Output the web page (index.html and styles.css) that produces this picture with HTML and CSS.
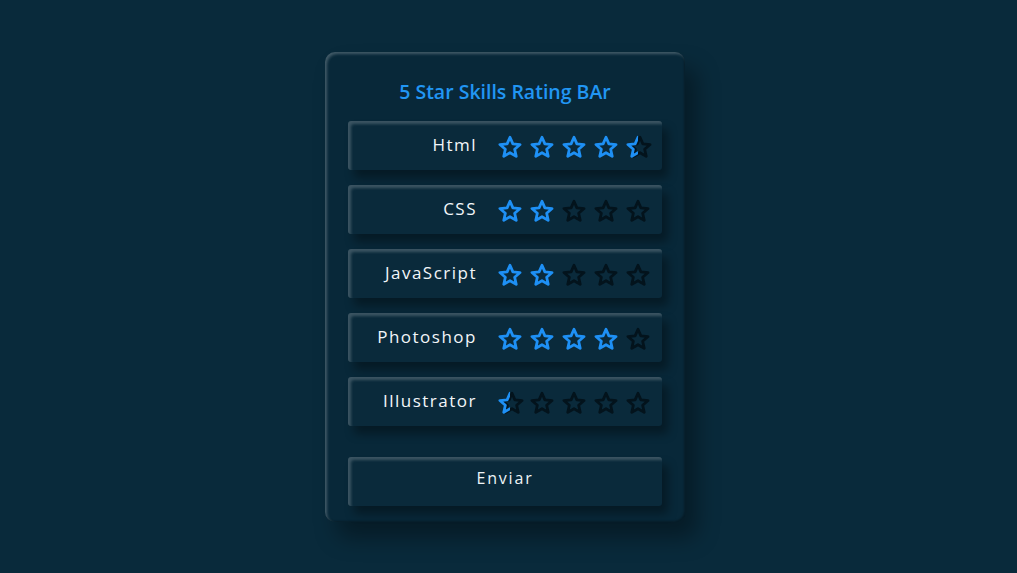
FILE: index.html
```html
<!DOCTYPE html>
<html lang="en">
<head>
<meta charset="utf-8">
<title>5 Star Skills Rating</title>
<link rel="stylesheet" href="styles.css">
</head>
<body>
<svg width="0" height="0" class="defs">
  <defs>
    <path id="star" d="M12 2.2 L14.88 8.84 L22.08 9.52 L16.66 14.31 L18.23 21.38 L12 17.7 L5.77 21.38 L7.34 14.31 L1.92 9.52 L9.12 8.84 Z"/>
  </defs>
</svg>
<main class="page">
  <section class="card">
    <h1 class="title">5 Star Skills Rating BAr</h1>
    <div class="rows">
      <div class="row">
        <span class="label">Html</span>
        <div class="stars">
          <svg class="star on" viewBox="0 0 24 24"><use href="#star"/></svg>
          <svg class="star on" viewBox="0 0 24 24"><use href="#star"/></svg>
          <svg class="star on" viewBox="0 0 24 24"><use href="#star"/></svg>
          <svg class="star on" viewBox="0 0 24 24"><use href="#star"/></svg>
          <span class="half"><svg class="star off shift" viewBox="0 0 24 24"><use href="#star"/></svg><span class="half-clip"><svg class="star on" viewBox="0 0 24 24"><use href="#star"/></svg></span></span>
        </div>
      </div>
      <div class="row">
        <span class="label">CSS</span>
        <div class="stars">
          <svg class="star on" viewBox="0 0 24 24"><use href="#star"/></svg>
          <svg class="star on" viewBox="0 0 24 24"><use href="#star"/></svg>
          <svg class="star off" viewBox="0 0 24 24"><use href="#star"/></svg>
          <svg class="star off" viewBox="0 0 24 24"><use href="#star"/></svg>
          <svg class="star off" viewBox="0 0 24 24"><use href="#star"/></svg>
        </div>
      </div>
      <div class="row">
        <span class="label">JavaScript</span>
        <div class="stars">
          <svg class="star on" viewBox="0 0 24 24"><use href="#star"/></svg>
          <svg class="star on" viewBox="0 0 24 24"><use href="#star"/></svg>
          <svg class="star off" viewBox="0 0 24 24"><use href="#star"/></svg>
          <svg class="star off" viewBox="0 0 24 24"><use href="#star"/></svg>
          <svg class="star off" viewBox="0 0 24 24"><use href="#star"/></svg>
        </div>
      </div>
      <div class="row">
        <span class="label">Photoshop</span>
        <div class="stars">
          <svg class="star on" viewBox="0 0 24 24"><use href="#star"/></svg>
          <svg class="star on" viewBox="0 0 24 24"><use href="#star"/></svg>
          <svg class="star on" viewBox="0 0 24 24"><use href="#star"/></svg>
          <svg class="star on" viewBox="0 0 24 24"><use href="#star"/></svg>
          <svg class="star off" viewBox="0 0 24 24"><use href="#star"/></svg>
        </div>
      </div>
      <div class="row">
        <span class="label">Illustrator</span>
        <div class="stars">
          <span class="half"><svg class="star off shift" viewBox="0 0 24 24"><use href="#star"/></svg><span class="half-clip"><svg class="star on" viewBox="0 0 24 24"><use href="#star"/></svg></span></span>
          <svg class="star off" viewBox="0 0 24 24"><use href="#star"/></svg>
          <svg class="star off" viewBox="0 0 24 24"><use href="#star"/></svg>
          <svg class="star off" viewBox="0 0 24 24"><use href="#star"/></svg>
          <svg class="star off" viewBox="0 0 24 24"><use href="#star"/></svg>
        </div>
      </div>
    </div>
    <button class="submit" type="button">Enviar</button>
  </section>
</main>
</body>
</html>
```

FILE: styles.css
```css
* { box-sizing: border-box; }

html, body {
  margin: 0;
  height: 100%;
}

body {
  background: #092a3b;
  font-family: "Open Sans", "Noto Sans", sans-serif;
  color: #eef4f7;
}

.defs {
  position: absolute;
  width: 0;
  height: 0;
}

.page {
  height: 100%;
  display: flex;
  align-items: center;
  justify-content: center;
  padding-right: 7px;
}

.card {
  width: 360px;
  height: 470px;
  border-radius: 10px;
  background: #082839;
  padding: 24px 23px 0;
  display: flex;
  flex-direction: column;
  box-shadow:
    inset 2px 2px 3px rgba(255, 255, 255, 0.24),
    inset -1px -1px 2px rgba(0, 0, 0, 0.3),
    12px 16px 22px rgba(0, 0, 0, 0.35);
}

.title {
  margin: 0 0 16px;
  height: 29px;
  line-height: 29px;
  text-align: center;
  font-size: 19.5px;
  font-weight: 600;
  color: #2196f3;
  padding-top: 1px;
}

.rows {
  display: flex;
  flex-direction: column;
  gap: 15px;
}

.row {
  height: 49px;
  display: flex;
  align-items: center;
  justify-content: flex-end;
  padding-right: 12px;
  border-radius: 3px;
  background: #0a2a3b;
  box-shadow:
    inset 3px 3px 3px rgba(255, 255, 255, 0.2),
    6px 8px 10px rgba(0, 0, 0, 0.35);
}

.label {
  margin-right: 21px;
  font-size: 17px;
  font-weight: 500;
  letter-spacing: 1.5px;
  color: #f2f6f9;
  padding-bottom: 2px;
}

.stars {
  display: flex;
  gap: 8px;
  padding-top: 4px;
}

.star {
  display: block;
  width: 24px;
  height: 24px;
  overflow: visible;
  fill: none;
  stroke-width: 2.8;
  stroke-linejoin: round;
}

.star.on { stroke: #1e90f5; }
.star.off { stroke: #03131c; }

.half {
  position: relative;
  width: 24px;
  height: 24px;
}

.shift {
  position: absolute;
  left: 2px;
  top: 0;
}

.half-clip {
  position: absolute;
  left: 0;
  top: -2px;
  width: 12px;
  height: 28px;
  overflow: hidden;
}

.half-clip .star {
  margin-top: 2px;
}

.submit {
  margin-top: 31px;
  height: 49px;
  padding: 0 0 6px;
  border: none;
  border-radius: 3px;
  background: #0a2a3b;
  color: #eef4f7;
  font-family: inherit;
  font-size: 16px;
  font-weight: 500;
  letter-spacing: 1.8px;
  box-shadow:
    inset 3px 3px 3px rgba(255, 255, 255, 0.2),
    6px 8px 10px rgba(0, 0, 0, 0.35);
}
```
